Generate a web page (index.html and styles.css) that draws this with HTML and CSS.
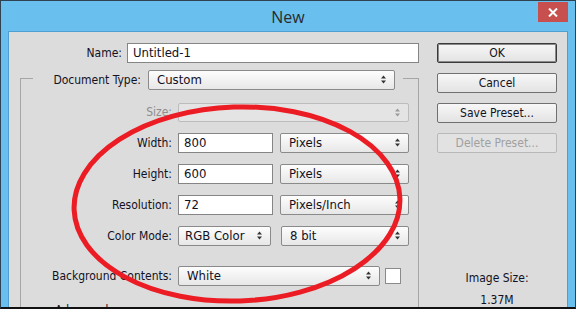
FILE: index.html
```html
<!DOCTYPE html>
<html lang="en">
<head>
    <meta charset="UTF-8">
    <title>New</title>
    <link rel="stylesheet" href="styles.css">
</head>
<body>

    <div class="window">
        <!-- Title Bar -->
        <div class="titlebar">
            <span class="title">New</span>
            <div class="close-btn">
                <svg width="10" height="9" viewBox="0 0 10 9"><path d="M1 0.5 L9 8.5 M9 0.5 L1 8.5" stroke="#fff" stroke-width="2"/></svg>
            </div>
        </div>

        <div class="client">
            <!-- Left side: the form -->
            <div class="form">
                <div class="row name-row">
                    <label class="name-label">Name:</label>
                    <div class="input name-input">Untitled-1</div>
                </div>

                <fieldset class="group">
                    <legend class="legend">
                        <label class="doc-label">Document Type:</label>
                        <div class="select doc-select">Custom<span class="arrows"><svg width="5" height="9" viewBox="0 0 5 9"><path d="M0 3.5 L2.5 0.5 L5 3.5 Z M0 5.5 L2.5 8.5 L5 5.5 Z" fill="#333"/></svg></span></div>
                    </legend>

                    <div class="row size-row">
                        <label class="field-label disabled">Size:</label>
                        <div class="select size-select disabled"><span class="arrows"><svg width="5" height="9" viewBox="0 0 5 9"><path d="M0 3.5 L2.5 0.5 L5 3.5 Z M0 5.5 L2.5 8.5 L5 5.5 Z" fill="#9a9a9a"/></svg></span></div>
                    </div>

                    <div class="row">
                        <label class="field-label">Width:</label>
                        <div class="input num-input">800</div>
                        <div class="select unit-select">Pixels<span class="arrows"><svg width="5" height="9" viewBox="0 0 5 9"><path d="M0 3.5 L2.5 0.5 L5 3.5 Z M0 5.5 L2.5 8.5 L5 5.5 Z" fill="#333"/></svg></span></div>
                    </div>

                    <div class="row">
                        <label class="field-label">Height:</label>
                        <div class="input num-input">600</div>
                        <div class="select unit-select">Pixels<span class="arrows"><svg width="5" height="9" viewBox="0 0 5 9"><path d="M0 3.5 L2.5 0.5 L5 3.5 Z M0 5.5 L2.5 8.5 L5 5.5 Z" fill="#333"/></svg></span></div>
                    </div>

                    <div class="row">
                        <label class="field-label">Resolution:</label>
                        <div class="input num-input">72</div>
                        <div class="select unit-select">Pixels/Inch<span class="arrows"><svg width="5" height="9" viewBox="0 0 5 9"><path d="M0 3.5 L2.5 0.5 L5 3.5 Z M0 5.5 L2.5 8.5 L5 5.5 Z" fill="#333"/></svg></span></div>
                    </div>

                    <div class="row">
                        <label class="field-label">Color Mode:</label>
                        <div class="select mode-select">RGB Color<span class="arrows"><svg width="5" height="9" viewBox="0 0 5 9"><path d="M0 3.5 L2.5 0.5 L5 3.5 Z M0 5.5 L2.5 8.5 L5 5.5 Z" fill="#333"/></svg></span></div>
                        <div class="select bit-select">8 bit<span class="arrows"><svg width="5" height="9" viewBox="0 0 5 9"><path d="M0 3.5 L2.5 0.5 L5 3.5 Z M0 5.5 L2.5 8.5 L5 5.5 Z" fill="#333"/></svg></span></div>
                    </div>

                    <div class="row bg-row">
                        <label class="field-label">Background Contents:</label>
                        <div class="select bg-select">White<span class="arrows"><svg width="5" height="9" viewBox="0 0 5 9"><path d="M0 3.5 L2.5 0.5 L5 3.5 Z M0 5.5 L2.5 8.5 L5 5.5 Z" fill="#333"/></svg></span></div>
                        <div class="swatch"></div>
                    </div>

                    <div class="advanced">Advanced</div>
                </fieldset>
            </div>

            <!-- Right side: buttons -->
            <div class="side">
                <div class="btn default">OK</div>
                <div class="btn">Cancel</div>
                <div class="btn">Save Preset...</div>
                <div class="btn disabled">Delete Preset...</div>

                <div class="image-size">
                    <div>Image Size:</div>
                    <div class="size-value">1.37M</div>
                </div>
            </div>
        </div>

        <!-- Red marker ellipse drawn over the dialog -->
        <svg class="marker" width="576" height="309" viewBox="0 0 576 309">
            <ellipse cx="237" cy="204" rx="163" ry="97" transform="rotate(-2 237 204)" fill="none" stroke="#ec1c24" stroke-width="5"/>
        </svg>
    </div>

</body>
</html>
```

FILE: styles.css
```css
/* Photoshop "New" dialog */
body {
    margin: 0;
    font-family: 'DejaVu Sans Condensed', 'DejaVu Sans', sans-serif;
    font-size: 12px;
    color: #111124;
}

.window {
    position: relative;
    width: 576px;
    height: 309px;
    box-sizing: border-box;
    border: 1px solid #2e4252;
    border-bottom: 2px solid #111;
    background-color: #69c0ee;
    overflow: hidden;
    display: flex;
    flex-direction: column;
}

/* Title Bar */
.titlebar {
    height: 30px;
    flex-shrink: 0;
    display: flex;
    align-items: center;
    justify-content: center;
}

.title {
    font-family: 'Open Sans', 'Noto Sans', sans-serif;
    font-size: 16px;
    color: #2b2b2b;
    margin-top: 2px;
}

.close-btn {
    position: absolute;
    top: 1px;
    right: 7px;
    width: 30px;
    height: 20px;
    background-color: #c7504f;
    display: flex;
    align-items: center;
    justify-content: center;
}

/* Dialog client area */
.client {
    flex: 1;
    margin: 0 7px;
    background-color: #dcdcdc;
    border: 1px solid #4f9fd4;
    border-bottom: none;
    display: flex;
}

.form {
    width: 420px;
    flex-shrink: 0;
}

.row {
    display: flex;
    align-items: center;
    height: 20px;
    margin-top: 11px;
}

.name-row {
    margin-top: 11px;
}

.name-label {
    width: 113px;
    text-align: right;
    margin-right: 5px;
}

.input {
    height: 20px;
    box-sizing: border-box;
    background-color: #fff;
    border: 1px solid #858585;
    padding-left: 5px;
    line-height: 18px;
    font-size: 13px;
}

.name-input {
    width: 292px;
}

/* Group box */
.group {
    margin: 7px 0 0 11px;
    width: 399px;
    box-sizing: border-box;
    padding: 0;
    border: 1px solid #a6a6a6;
    border-bottom: none;
    min-width: 0;
}

.legend {
    display: flex;
    height: 16px;
    padding: 0 8px 0 1px;
    margin-left: 12px;
}

.doc-label {
    width: 107px;
    text-align: right;
    margin-right: 7px;
    line-height: 20px;
}

.select {
    position: relative;
    height: 20px;
    box-sizing: border-box;
    border: 1px solid #8a8a8a;
    border-radius: 2px;
    background: linear-gradient(#fdfdfd, #e7e7e7);
    padding-left: 8px;
    line-height: 18px;
    font-size: 13px;
    flex-shrink: 0;
}

.select.disabled {
    border-color: #bcbcbc;
    background: #e4e4e4;
}

.arrows {
    position: absolute;
    right: 8px;
    top: 4px;
    line-height: 0;
}

.doc-select {
    width: 247px;
}

.size-row {
    margin-top: 16px;
}

.field-label {
    width: 151px;
    text-align: right;
    margin-right: 6px;
    flex-shrink: 0;
}

.field-label.disabled {
    color: #8e8e8e;
}

.size-select {
    width: 231px;
    height: 19px;
}

.num-input {
    width: 95px;
    margin-right: 7px;
}

.unit-select {
    width: 129px;
}

.mode-select {
    width: 93px;
    margin-right: 10px;
    padding-left: 6px;
}

.bit-select {
    width: 128px;
}

.bg-row {
    margin-top: 20px;
}

.bg-select {
    width: 202px;
    margin-right: 5px;
}

.swatch {
    width: 16px;
    height: 16px;
    box-sizing: border-box;
    background-color: #fff;
    border: 1px solid #8a8a8a;
}

.advanced {
    margin: 17px 0 0 34px;
}

/* Buttons column */
.side {
    padding-left: 8px;
}

.btn {
    width: 120px;
    height: 20px;
    box-sizing: border-box;
    margin-top: 10px;
    border: 1px solid #707070;
    border-radius: 2px;
    background: linear-gradient(#f7f7f7, #e3e3e3);
    text-align: center;
    line-height: 18px;
}

.btn.default {
    margin-top: 11px;
    border-color: #3a3a3a;
    box-shadow: inset 0 0 0 1px #8a8a8a;
}

.btn.disabled {
    color: #a0a0a0;
    border-color: #b8b8b8;
    background: #e2e2e2;
}

.image-size {
    margin-top: 114px;
    text-align: center;
    width: 120px;
    line-height: 22px;
}

/* Red annotation on top */
.marker {
    position: absolute;
    top: -1px;
    left: -1px;
    pointer-events: none;
}
```
